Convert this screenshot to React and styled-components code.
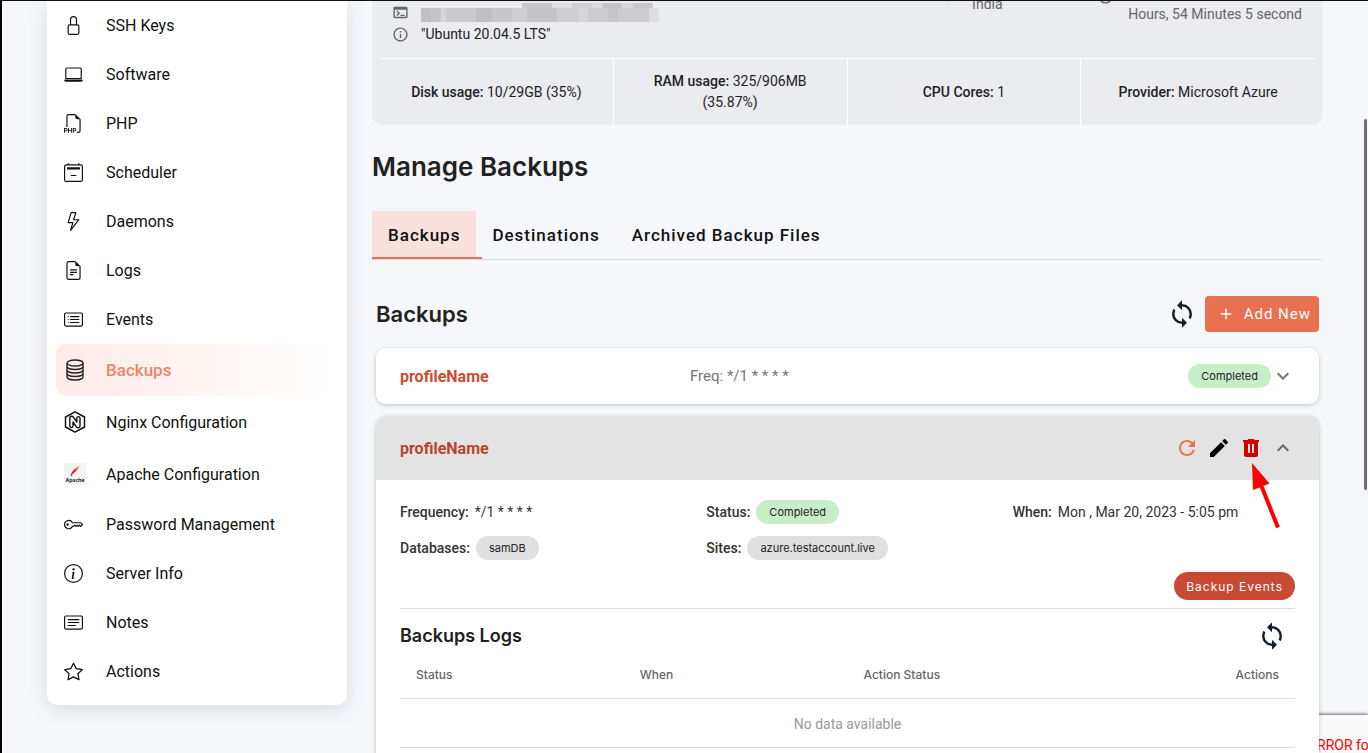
import { useState } from 'react';
import styled, { createGlobalStyle, css } from 'styled-components';
import {
    BsLock,
    BsLaptop,
    BsFiletypePhp,
    BsCalendar2Minus,
    BsLightning,
    BsFileEarmarkText,
    BsCardList,
    BsKey,
    BsInfoCircle,
    BsCardText,
    BsStar,
} from 'react-icons/bs';
import {
    MdOutlineTerminal,
    MdInfoOutline,
    MdAdd,
    MdRefresh,
    MdEdit,
    MdKeyboardArrowDown,
    MdKeyboardArrowUp,
    MdOutlineLocationOn,
    MdAccessTime,
} from 'react-icons/md';

const DatabaseIcon = () => (
    <svg width="22" height="22" viewBox="0 0 22 22" fill="none" stroke="#222" strokeWidth="1.3">
        <ellipse cx="11" cy="4" rx="8" ry="3" />
        <path d="M3 4v14c0 1.7 3.6 3 8 3s8-1.3 8-3V4" />
        <path d="M3 7.5c0 1.700 3.600 3 8 3s8-1.300 8-3M3 11c0 1.700 3.600 3 8 3s8-1.300 8-3M3 14.500c0 1.700 3.600 3 8 3s8-1.300 8-3" />
    </svg>
);

const NginxIcon = () => (
    <svg width="22" height="22" viewBox="0 0 22 22" fill="none" stroke="#111" strokeLinejoin="round">
        <path strokeWidth="1.5" d="M11 .9l9.500 5.100v10L11 21.100 1.500 16V6z" />
        <path strokeWidth="1.4" d="M5.800 15V7c0-2 2.600-2.300 3.600-.9l3.400 4.900V7c0-1.900 3.200-1.900 3.200 0v8c0 2-2.600 2.300-3.600.8L9 11v4c0 1.900-3.200 1.900-3.200 0z" />
    </svg>
);

const ApacheIcon = () => (
    <svg width="22" height="22" viewBox="0 0 22 22">
        <defs>
            <linearGradient id="feather" x1="0" y1="1" x2="1" y2="0">
                <stop offset="0" stopColor="#8b1d78" />
                <stop offset=".45" stopColor="#d8204a" />
                <stop offset="1" stopColor="#f39a2b" />
            </linearGradient>
        </defs>
        <rect width="22" height="22" fill="#f3f3f3" />
        <path d="M6.500 13.200c.4-3.200 3.200-7.800 9-10.200-1.400 2.300-3.300 6-6.900 8L7.400 13z" fill="url(#feather)" />
        <text x="11" y="18.5" textAnchor="middle" fontFamily="Inter, sans-serif" fontSize="5" fontWeight="700" fill="#222">Apache</text>
    </svg>
);

const SyncIcon = () => (
    <svg width="30" height="30" viewBox="0 0 24 24" fill="#14202e">
        <path d="M12 18a6 6 0 0 1-6-6c0-1 .25-1.970.7-2.800L5.240 7.740A7.930 7.930 0 0 0 4 12a8 8 0 0 0 8 8v3l4-4-4-4m0-11V1L8 5l4 4V6a6 6 0 0 1 6 6c0 1-.25 1.970-.7 2.800l1.460 1.460A7.930 7.930 0 0 0 20 12a8 8 0 0 0-8-8z" />
    </svg>
);

const TrashIcon = () => (
    <svg width="24" height="24" viewBox="0 0 24 24" fill="#d10000">
        <path fillRule="evenodd" d="M9 3h6v1h5v2h-1v13a2 2 0 0 1-2 2H7a2 2 0 0 1-2-2V6H4V4h5zM9 8v9h2V8zm4 0v9h2V8z" />
    </svg>
);

// redacted host address: [x, y, width, colour]
const mosaic = [
    [101, 0, 30, '#c9c8cd'], [131, 0, 20, '#e0dfe4'], [151, 0, 20, '#d0cfd5'], [171, 0, 11, '#d9d8dd'],
    [182, 0, 18, '#c4c3c8'], [200, 0, 12, '#d6d5da'], [212, 0, 20, '#c9c8cd'],
    [0, 5, 10, '#c0bfc3'], [10, 5, 10, '#c6c5cb'], [20, 5, 5, '#d6d6da'], [25, 5, 30, '#cbcacf'],
    [55, 5, 16, '#c0bfc4'], [71, 5, 20, '#c8c7cc'], [91, 5, 15, '#cfced3'], [106, 5, 30, '#c4c4c9'],
    [136, 5, 21, '#cfcfd3'], [157, 5, 10, '#d6d6da'], [167, 5, 20, '#cbcbd0'], [187, 5, 10, '#c6c6cb'],
    [197, 5, 31, '#cbcbd0'], [228, 5, 10, '#dfdfe3'],
];

const menu = [
    { label: 'SSH Keys', icon: <BsLock /> },
    { label: 'Software', icon: <BsLaptop /> },
    { label: 'PHP', icon: <BsFiletypePhp /> },
    { label: 'Scheduler', icon: <BsCalendar2Minus /> },
    { label: 'Daemons', icon: <BsLightning /> },
    { label: 'Logs', icon: <BsFileEarmarkText /> },
    { label: 'Events', icon: <BsCardList /> },
    { label: 'Backups', icon: <DatabaseIcon />, tall: true, active: true },
    { label: 'Nginx Configuration', icon: <NginxIcon />, tall: true },
    { label: 'Apache Configuration', icon: <ApacheIcon />, tall: true },
    { label: 'Password Management', icon: <BsKey /> },
    { label: 'Server Info', icon: <BsInfoCircle /> },
    { label: 'Notes', icon: <BsCardText /> },
    { label: 'Actions', icon: <BsStar /> },
];

const stats = [
    ['Disk usage:', '10/29GB (35%)'],
    ['RAM usage:', '325/906MB (35.87%)'],
    ['CPU Cores:', '1'],
    ['Provider:', 'Microsoft Azure'],
];

const tabs = ['Backups', 'Destinations', 'Archived Backup Files'];

export default function App() {
    const [tab, setTab] = useState('Backups');

    return (
        <Page>
            <GlobalStyle />
            <Sidebar>
                {menu.map((item) => (
                    <MenuLink key={item.label} href="#" $tall={item.tall} $active={item.active}>
                        <MenuIcon>{item.icon}</MenuIcon>
                        {item.label}
                    </MenuLink>
                ))}
            </Sidebar>

            <Main>
                <ServerCard>
                    <ServerTop>
                        <HostInfo>
                            <HostLine>
                                <MdOutlineTerminal />
                                <svg width="238" height="19" viewBox="0 0 238 19" shapeRendering="crispEdges">
                                    {mosaic.map(([x, y, w, fill]) => (
                                        <rect key={`${x}-${y}`} x={x} y={y} width={w} height={y ? 14 : 5} fill={fill} />
                                    ))}
                                </svg>
                            </HostLine>
                            <HostLine>
                                <MdInfoOutline />
                                <span>"Ubuntu 20.04.5 LTS"</span>
                            </HostLine>
                        </HostInfo>
                        <Location>
                            <MdOutlineLocationOn />
                            <span>India</span>
                        </Location>
                        <Uptime>
                            <MdAccessTime />
                            <span>Hours, 54 Minutes 5 second</span>
                        </Uptime>
                    </ServerTop>
                    <Stats>
                        {stats.map(([name, value]) => (
                            <Stat key={name}>
                                <span><b>{name}</b> {value}</span>
                            </Stat>
                        ))}
                    </Stats>
                </ServerCard>

                <PageTitle>Manage Backups</PageTitle>

                <Tabs role="tablist">
                    {tabs.map((name) => (
                        <Tab key={name} role="tab" aria-selected={tab === name} $active={tab === name} onClick={() => setTab(name)}>
                            {name}
                        </Tab>
                    ))}
                </Tabs>

                <Section>
                    <SectionHead>
                        <SectionTitle>Backups</SectionTitle>
                        <IconButton aria-label="Refresh backups"><SyncIcon /></IconButton>
                        <AddButton><MdAdd size={18} />Add New</AddButton>
                    </SectionHead>

                    <Panel>
                        <PanelHead>
                            <ProfileName>profileName</ProfileName>
                            <Freq>Freq: */1 * * * *</Freq>
                            <PanelActions>
                                <Chip $green>Completed</Chip>
                                <SmallIconButton aria-label="Expand"><MdKeyboardArrowDown color="#757575" /></SmallIconButton>
                            </PanelActions>
                        </PanelHead>
                    </Panel>

                    <Panel>
                        <PanelHead $open>
                            <ProfileName $open>profileName</ProfileName>
                            <PanelActions $spaced>
                                <SmallIconButton aria-label="Run again"><MdRefresh color="#e77150" /></SmallIconButton>
                                <SmallIconButton aria-label="Edit"><MdEdit color="#000" /></SmallIconButton>
                                <SmallIconButton aria-label="Delete">
                                    <TrashIcon />
                                    <Pointer width="30" height="68" viewBox="0 0 30 68">
                                        <path d="M10 22L27 64.5" stroke="#f00" strokeWidth="4" />
                                        <path d="M1 0L18.5 20.5 2 27z" fill="#f00" />
                                    </Pointer>
                                </SmallIconButton>
                                <SmallIconButton aria-label="Collapse"><MdKeyboardArrowUp color="#666" /></SmallIconButton>
                            </PanelActions>
                        </PanelHead>

                        <PanelBody>
                            <Details>
                                <Detail><b>Frequency:</b> */1 * * * *</Detail>
                                <Detail><b>Status:</b> <Chip $green>Completed</Chip></Detail>
                                <Detail><b>When:</b> Mon , Mar 20, 2023 - 5:05 pm</Detail>
                                <Detail><b>Databases:</b> <Chip>samDB</Chip></Detail>
                                <Detail><b>Sites:</b> <Chip>azure.testaccount.live</Chip></Detail>
                            </Details>
                            <EventsRow>
                                <EventsButton>Backup Events</EventsButton>
                            </EventsRow>

                            <LogsHead>
                                <LogsTitle>Backups Logs</LogsTitle>
                                <IconButton aria-label="Refresh logs"><SyncIcon /></IconButton>
                            </LogsHead>
                            <LogsTable>
                                <thead>
                                    <tr>
                                        <th>Status</th>
                                        <th>When</th>
                                        <th>Action Status</th>
                                        <th>Actions</th>
                                    </tr>
                                </thead>
                                <tbody>
                                    <tr>
                                        <td colSpan={4}>No data available</td>
                                    </tr>
                                </tbody>
                            </LogsTable>
                        </PanelBody>
                    </Panel>
                </Section>
            </Main>

            <ErrorToast>RROR for</ErrorToast>
            <ScrollThumb />
        </Page>
    );
}

const GlobalStyle = createGlobalStyle`
  * {
    box-sizing: border-box;
  }

  body {
    margin: 0;
    font-family: Roboto, sans-serif;
    font-size: 14px;
    line-height: 21px;
    color: #222;
  }

  button {
    padding: 0;
    border: 0;
    background: none;
    font: inherit;
    cursor: pointer;
  }

  h1, h2, h3 {
    margin: 0;
    font-family: Inter, sans-serif;
    font-weight: 600;
    color: #212121;
  }

  b {
    font-weight: 500;
  }
`;

const Page = styled.div`
  position: relative;
  display: flex;
  align-items: flex-start;
  gap: 25px;
  height: 100vh;
  padding: 0 45px;
  overflow: hidden;
  background: #f6f7fb;
  border-top: 1px solid #111;
  border-left: 2px solid #000;
`;

const Sidebar = styled.nav`
  flex: 0 0 300px;
  padding: 0 9px 9px;
  background: #fff;
  border-radius: 0 0 10px 10px;
  box-shadow: 0 4px 20px rgba(60, 60, 80, 0.14);
`;

const MenuLink = styled.a`
  display: flex;
  align-items: center;
  height: ${(props) => (props.$tall ? 52 : 49)}px;
  padding-left: 8px;
  border-radius: 10px;
  font-size: 16px;
  color: #111;
  text-decoration: none;

  ${(props) => props.$active && css`
    color: #f0856a;
    font-size: 17px;
    font-weight: 500;
    background: linear-gradient(90deg, #fdebe8, #fff);
  `}
`;

const MenuIcon = styled.span`
  display: flex;
  width: 42px;
  font-size: 19px;
  color: #111;
`;

const Main = styled.main`
  flex: 1;
  min-width: 0;
`;

const ServerCard = styled.section`
  padding: 0 8px;
  background: #ebecf0;
  border-radius: 0 0 10px 10px;
`;

const ServerTop = styled.div`
  display: grid;
  grid-template-columns: 5fr 2fr 220px;
  grid-template-rows: 57px;
  overflow: hidden;
  border-bottom: 1px solid #fff;
`;

const HostInfo = styled.div`
  display: flex;
  flex-direction: column;
  justify-content: flex-end;
  gap: 2px;
  padding: 0 0 13px 12px;
`;

const HostLine = styled.div`
  display: flex;
  align-items: center;
  gap: 12px;

  & > svg:first-child {
    width: 17px;
    height: 17px;
    color: #666;
  }
`;

const Location = styled.div`
  display: flex;
  align-items: flex-end;
  justify-content: center;
  gap: 16px;
  padding: 0 44px 43px 0;
  color: #666;

  svg {
    width: 17px;
    height: 17px;
    margin-bottom: 12px;
  }
`;

const Uptime = styled(Location)`
  justify-content: flex-end;
  gap: 14px;
  padding: 0 13px 33px 0;

  svg {
    margin-bottom: 20px;
  }
`;

const Stats = styled.div`
  display: grid;
  grid-template-columns: repeat(4, 1fr);
`;

const Stat = styled.div`
  display: flex;
  align-items: center;
  justify-content: center;
  min-height: 66px;
  padding: 12px 24px;
  text-align: center;
  border-right: 1px solid #fff;

  &:last-child {
    border-right: 0;
  }
`;

const PageTitle = styled.h1`
  padding: 23px 0 25px;
  font-size: 26px;
  line-height: 38px;
`;

const Tabs = styled.div`
  display: flex;
  height: 49px;
  border-bottom: 1px solid #d9dade;
`;

const Tab = styled.button`
  position: relative;
  padding: 0 16px;
  font-size: 17px;
  font-weight: 500;
  letter-spacing: 1px;
  color: #111;

  ${(props) => props.$active && css`
    background: #fae1dd;

    &::after {
      content: '';
      position: absolute;
      left: 0;
      right: -6px;
      bottom: 0;
      height: 2px;
      background: #e77150;
    }
  `}
`;

const Section = styled.section`
  padding: 36px 4px 0;
`;

const SectionHead = styled.div`
  display: flex;
  align-items: center;
  gap: 8px;
  height: 36px;
  margin-bottom: 16px;
`;

const SectionTitle = styled.h2`
  flex: 1;
  font-size: 22px;
  line-height: 36px;
`;

const IconButton = styled.button`
  display: flex;
`;

const AddButton = styled.button`
  display: flex;
  align-items: center;
  gap: 9px;
  height: 36px;
  padding: 0 8px 0 12px;
  border-radius: 4px;
  background: #e77150;
  color: #fff;
  font-size: 15px;
  letter-spacing: 1px;
`;

const Panel = styled.article`
  position: relative;
  z-index: 1;
  margin-bottom: 12px;
  background: #fff;
  border-radius: 10px;
  box-shadow: 0 1px 4px rgba(0, 0, 0, 0.22);
`;

const PanelHead = styled.header`
  display: flex;
  align-items: center;
  height: ${(props) => (props.$open ? 64 : 56)}px;
  padding: 0 24px;
  border-radius: ${(props) => (props.$open ? '10px 10px 0 0' : '10px')};
  background: ${(props) => (props.$open ? '#e3e3e3' : '#fff')};
`;

const ProfileName = styled.span`
  flex: 0 0 290px;
  font-size: 16px;
  font-weight: 700;
  color: ${(props) => (props.$open ? '#b9432f' : '#cf4b33')};
`;

const Freq = styled.span`
  font-size: 15px;
  color: #757575;
`;

const PanelActions = styled.div`
  display: flex;
  align-items: center;
  gap: ${(props) => (props.$spaced ? 8 : 0)}px;
  margin-left: auto;
`;

const SmallIconButton = styled.button`
  position: relative;
  display: flex;

  svg {
    width: 24px;
    height: 24px;
  }
`;

const Pointer = styled.svg`
  && {
    position: absolute;
    top: 27px;
    left: 12px;
    width: 30px;
    height: 68px;
    pointer-events: none;
  }
`;

const Chip = styled.span`
  display: inline-flex;
  align-items: center;
  height: 24px;
  padding: 0 13px;
  border-radius: 12px;
  background: ${(props) => (props.$green ? '#c8eec8' : '#e0e0e0')};
  color: #222;
  font-family: Inter, sans-serif;
  font-size: 11px;
`;

const PanelBody = styled.div`
  padding: 18px 24px 40px;
`;

const Details = styled.div`
  display: grid;
  grid-template-columns: repeat(3, 1fr);
  gap: 8px 24px;
  color: #333;
`;

const Detail = styled.div`
  display: flex;
  align-items: center;
  gap: 6px;
  min-height: 28px;
`;

const EventsRow = styled.div`
  display: flex;
  justify-content: flex-end;
  padding: 10px 0 8px;
  border-bottom: 1px solid #ddd;
`;

const EventsButton = styled.button`
  height: 28px;
  padding: 0 12px;
  border-radius: 14px;
  background: #c94a33;
  color: #fff;
  font-family: Inter, sans-serif;
  font-size: 12px;
  letter-spacing: 1px;
`;

const LogsHead = styled.div`
  display: flex;
  align-items: center;
  justify-content: space-between;
  height: 54px;
  padding-right: 8px;
`;

const LogsTitle = styled.h3`
  font-size: 18px;
  line-height: 24px;
`;

const LogsTable = styled.table`
  width: 100%;
  table-layout: fixed;
  border-collapse: collapse;

  th {
    height: 35px;
    padding: 0 16px 11px;
    text-align: left;
    font-family: Inter, sans-serif;
    font-size: 12px;
    font-weight: 500;
    color: #666;
    border-bottom: 1px solid #ddd;
  }

  th:last-child {
    text-align: right;
  }

  td {
    height: 49px;
    padding: 3px 0 0;
    text-align: center;
    color: #999;
    border-bottom: 1px solid #ddd;
  }
`;

const ErrorToast = styled.div`
  position: absolute;
  right: 0;
  bottom: 0;
  width: 51px;
  height: 38px;
  padding-top: 20px;
  overflow: hidden;
  white-space: nowrap;
  background: #fafafa;
  color: #f00;
  box-shadow: 0 -1px 3px rgba(0, 0, 0, 0.6);
`;

const ScrollThumb = styled.div`
  position: absolute;
  top: 118px;
  right: 1px;
  width: 3px;
  height: 371px;
  border-radius: 2px;
  background: #6f6f6f;
`;
